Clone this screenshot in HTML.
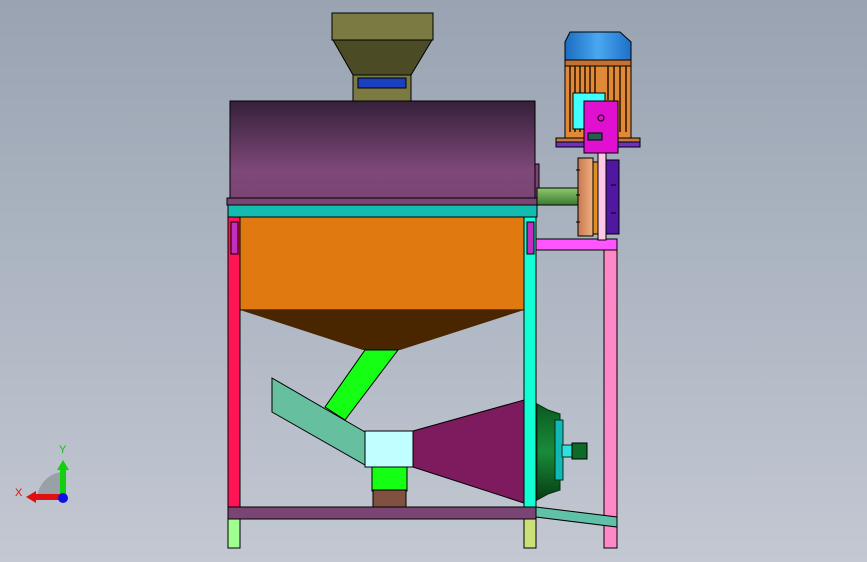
<!DOCTYPE html>
<html><head><meta charset="utf-8"><style>
html,body{margin:0;padding:0;width:867px;height:562px;overflow:hidden}
body{background:linear-gradient(#99a3b1 0%,#aeb6c3 50%,#c3c8d2 100%)}
svg{display:block}
</style></head><body>
<svg width="867" height="562" viewBox="0 0 867 562" xmlns="http://www.w3.org/2000/svg" stroke="#000" stroke-width="1">
<defs>
<linearGradient id="drum" x1="0" y1="0" x2="0" y2="1"><stop offset="0" stop-color="#35203a"/><stop offset="0.7" stop-color="#7e4878"/><stop offset="1" stop-color="#7a4574"/></linearGradient>
<linearGradient id="blue" x1="0" y1="0" x2="1" y2="0"><stop offset="0" stop-color="#1a6cc0"/><stop offset="0.5" stop-color="#4aa8f0"/><stop offset="1" stop-color="#1e70c8"/></linearGradient>
<linearGradient id="fan" x1="0" y1="0" x2="0" y2="1"><stop offset="0" stop-color="#0a5a20"/><stop offset="0.5" stop-color="#1a8a3a"/><stop offset="1" stop-color="#063d14"/></linearGradient>
<linearGradient id="shaft" x1="0" y1="0" x2="0" y2="1"><stop offset="0" stop-color="#8ec870"/><stop offset="1" stop-color="#3d7a2e"/></linearGradient>
<linearGradient id="pul" x1="0" y1="0" x2="1" y2="0"><stop offset="0" stop-color="#c87850"/><stop offset="1" stop-color="#f0b080"/></linearGradient>
</defs>
<!-- hopper -->
<rect x="332" y="13" width="101" height="27" fill="#7a7a42"/>
<polygon points="333,40 432,40 411,75 353,75" fill="#4b4b26"/>
<rect x="353" y="75" width="58" height="29" fill="#7a7a42"/>
<rect x="358" y="78" width="48" height="10" fill="#1a40c0"/>
<!-- drum -->
<rect x="230" y="101" width="305" height="99" fill="url(#drum)"/>
<rect x="535" y="164" width="4" height="36" fill="#7a4574"/>
<rect x="227" y="198" width="311" height="7" fill="#7a4574"/>
<rect x="228" y="205" width="309" height="12" fill="#12bcb0"/>
<!-- orange body -->
<rect x="240" y="217" width="284" height="93" fill="#e07a10"/>
<polygon points="240,310 524,310 400,350 363,350" fill="#4a2600" stroke="none"/>
<!-- legs -->
<rect x="228" y="217" width="12" height="290" fill="#ff1555"/>
<rect x="524" y="217" width="12" height="290" fill="#12ffd5"/>
<rect x="231" y="222" width="7" height="32" fill="#c030c0"/>
<rect x="527" y="222" width="7" height="32" fill="#c030c0"/>
<rect x="604" y="250" width="13" height="298" fill="#ff88c8"/>
<rect x="536" y="239" width="81" height="11" fill="#ff55ff"/>
<!-- chutes -->
<polygon points="365,350 398,350 345,420 325,407" fill="#14ff14"/>
<polygon points="272,378 365,432 365,465 272,412" fill="#66c0a0"/>
<polygon points="413,431 524,400 524,503 413,467" fill="#7e1a5e"/>
<rect x="365" y="431" width="48" height="36" fill="#c0ffff"/>
<rect x="372" y="467" width="35" height="24" fill="#14ff14"/>
<rect x="373" y="490" width="33" height="17" fill="#805040"/>
<!-- fan -->
<polygon points="537,404 548,410 560,414 560,490 548,494 537,500" fill="url(#fan)" stroke="#053010"/>
<rect x="555" y="420" width="8" height="60" fill="#10b8b8" stroke="#053010"/>
<rect x="562" y="445" width="18" height="12" fill="#30e0e0" stroke="#053010"/>
<rect x="572" y="443" width="15" height="16" fill="#0d6a28"/>
<!-- bottom -->
<rect x="228" y="507" width="308" height="12" fill="#7a4574"/>
<polygon points="536,507 617,517 617,527 536,517" fill="#60c0a8"/>
<rect x="228" y="519" width="12" height="29" fill="#a0ff90"/>
<rect x="524" y="519" width="12" height="29" fill="#cce07a"/>
<!-- motor -->
<rect x="537" y="188" width="42" height="17" fill="url(#shaft)"/>
<polygon points="570,32 620,32 631,42 631,60 565,60 565,42" fill="url(#blue)"/>
<rect x="565" y="60" width="66" height="78" fill="#e08a38"/>
<g stroke="#2a1200" stroke-width="1.5">
<line x1="570" y1="66" x2="570" y2="132"/><line x1="575" y1="66" x2="575" y2="132"/><line x1="580" y1="66" x2="580" y2="132"/><line x1="585" y1="66" x2="585" y2="100"/><line x1="590" y1="66" x2="590" y2="100"/><line x1="595" y1="66" x2="595" y2="100"/><line x1="608" y1="66" x2="608" y2="100"/><line x1="614" y1="66" x2="614" y2="132"/><line x1="620" y1="66" x2="620" y2="132"/><line x1="626" y1="66" x2="626" y2="132"/>
</g>
<rect x="565" y="60" width="66" height="6" fill="#c87030"/>
<rect x="573" y="93" width="32" height="36" fill="#40ffff"/>
<rect x="556" y="138" width="84" height="9" fill="#c87838"/>
<rect x="556" y="142" width="84" height="5" fill="#7030c0"/>
<rect x="584" y="101" width="34" height="52" fill="#e010d0"/>
<circle cx="601" cy="118" r="3" fill="none"/>
<rect x="588" y="133" width="14" height="7" fill="#206050"/>
<rect x="578" y="158" width="15" height="78" fill="url(#pul)"/>
<rect x="593" y="162" width="6" height="72" fill="#e09020"/>
<rect x="598" y="153" width="8" height="87" fill="#ffc8e8"/>
<rect x="606" y="160" width="13" height="74" fill="#5018a0"/>
<g stroke="#000" stroke-width="1"><line x1="576" y1="170" x2="580" y2="170"/><line x1="576" y1="195" x2="580" y2="195"/><line x1="576" y1="222" x2="580" y2="222"/><line x1="611" y1="185" x2="616" y2="185"/><line x1="611" y1="213" x2="616" y2="213"/></g>
<!-- triad -->
<path d="M37,500 A28,28 0 0 1 62,472 L62,500 Z" fill="#9aa0a8" stroke="none"/>
<rect x="60" y="468" width="6" height="30" fill="#10d010" stroke="none"/>
<polygon points="57,470 63,460 69,470" fill="#10d010" stroke="none"/>
<rect x="34" y="494" width="28" height="6" fill="#e01010" stroke="none"/>
<polygon points="36,491 26,497 36,503" fill="#e01010" stroke="none"/>
<circle cx="63" cy="498" r="5" fill="#1010e0" stroke="none"/>
<text x="59" y="453" font-family="Liberation Sans,sans-serif" font-size="11" fill="#10c010" stroke="none">Y</text>
<text x="15" y="496" font-family="Liberation Sans,sans-serif" font-size="11" fill="#e01010" stroke="none">X</text>
</svg>
</body></html>
